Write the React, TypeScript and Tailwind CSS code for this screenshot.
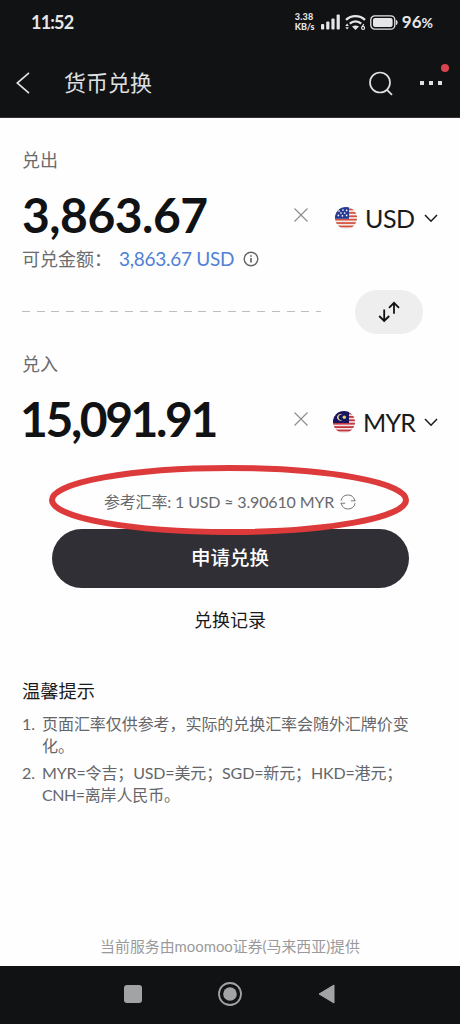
import { ReactNode } from 'react';

const UsFlag = () => (
  <svg viewBox="0 0 22 22" className="ml-[2px] h-[22px] w-[22px]">
    <clipPath id="us-round">
      <circle cx="11" cy="11" r="11" />
    </clipPath>
    <g clipPath="url(#us-round)">
      <rect width="22" height="22" fill="#f3e9e6" />
      {[1.6, 5, 8.4, 11.8, 15.2, 18.6].map((y) => (
        <rect key={y} y={y} width="22" height="1.7" fill="#d2503f" />
      ))}
      <rect width="14" height="11.8" fill="#263c94" />
      {[
        [4, 4], [8, 3], [11.6, 3.4], [6, 6], [9.6, 6], [3.4, 8.4], [7.4, 8.8], [11.6, 8.4],
      ].map(([x, y]) => (
        <circle key={`${x}-${y}`} cx={x} cy={y} r="0.85" fill="#fff" />
      ))}
    </g>
  </svg>
);

const MyFlag = () => (
  <svg viewBox="0 0 22 22" className="h-[22px] w-[22px]">
    <clipPath id="my-round">
      <circle cx="11" cy="11" r="11" />
    </clipPath>
    <g clipPath="url(#my-round)">
      <rect width="22" height="22" fill="#f0e4e6" />
      {[1.6, 5, 8.4, 11.8, 15.2, 18.6].map((y) => (
        <rect key={y} y={y} width="22" height="1.8" fill="#c63640" />
      ))}
      <rect width="16" height="12" fill="#17165f" />
      <path d="M9.4 3.9a3.2 3.2 0 1 0 0 4.9 2.7 2.7 0 1 1 0-4.900z" fill="#e9d9a0" />
      <circle cx="11.3" cy="6.3" r="1.7" fill="#e8cf6a" />
    </g>
  </svg>
);

type CurrencyRowProps = {
  amount: string;
  code: string;
  flag: ReactNode;
  codeClass: string;
  amountClass: string;
};

const CurrencyRow = ({ amount, code, flag, codeClass, amountClass }: CurrencyRowProps) => (
  <div className="flex h-[56px] items-center">
    <p className={`flex-1 text-[48px] leading-[56px] font-bold text-[#111214] ${amountClass}`}>{amount}</p>
    <svg viewBox="0 0 14 14" className="h-[14px] w-[14px]" fill="none" stroke="#8c8c8c" strokeWidth="1.1">
      <path d="M.5.5l13 13M13.5.5l-13 13" />
    </svg>
    <div className="ml-[25px] flex w-[105px] items-center pt-[6px]">
      {flag}
      <span className={`flex-1 text-[25px] leading-[28px] text-[#1a1a1a] ${codeClass}`}>{code}</span>
      <svg viewBox="0 0 14 9" className="h-[9px] w-[14px]" fill="none" stroke="#1a1a1a" strokeWidth="1.5">
        <path d="M1 1l6 6.2L13 1" />
      </svg>
    </div>
  </div>
);

const StatusBar = () => (
  <div className="flex h-[46px] items-center pr-[27px] pb-[2px] pl-[31px] text-[#e6e6e8]">
    <span className="flex-1 text-[18px] font-bold tracking-[-0.8px]">11:52</span>
    <div className="w-[24px] text-[9px] leading-[10px] font-black tracking-[0.2px] whitespace-nowrap">
      <p>3.38</p>
      <p className="tracking-[-0.1px]">KB/s</p>
    </div>
    <svg viewBox="0 0 19 16" className="ml-[2px] h-4 w-[19px]" fill="currentColor">
      <rect x="0" y="10" width="3.2" height="5.5" rx="1" />
      <rect x="5.2" y="7.5" width="3.2" height="8" rx="1" />
      <rect x="10.4" y="4.5" width="3.2" height="11" rx="1" />
      <rect x="15.6" y="0.5" width="3.2" height="15" rx="1" />
    </svg>
    <svg viewBox="0 0 21 17" className="ml-[5px] h-[17px] w-[21px]" fill="none" stroke="currentColor">
      <path d="M1 5.8a14 14 0 0 1 19 0" strokeWidth="2.4" />
      <path d="M4.8 9.6a8.4 8.4 0 0 1 11.4 0" strokeWidth="2.3" />
      <path d="M7 12.6q3.5-2.4 7 0l-3.5 3.4z" fill="currentColor" stroke="none" />
      <path d="M.3 12l1.8-2.4L3.9 12zM.3 13.2l1.8 2.4 1.8-2.4z" fill="currentColor" stroke="none" />
      <path d="M18.8 10l-1.6 2.7" strokeWidth="1.2" />
      <circle cx="18.1" cy="13.9" r="1.5" strokeWidth="1.2" />
    </svg>
    <svg viewBox="0 0 28 15" className="ml-[4px] h-[15px] w-7" fill="none">
      <rect x="0.8" y="0.8" width="24" height="13.4" rx="4" stroke="currentColor" strokeWidth="1.3" />
      <rect x="3" y="3" width="19.6" height="9" rx="2" fill="currentColor" />
      <path d="M26 4.8q1.6.6 1.6 2.7T26 10.200z" fill="currentColor" />
    </svg>
    <span className="ml-[4px] text-[17px] font-bold">
      96<span className="text-[14px]">%</span>
    </span>
  </div>
);

const TitleBar = () => (
  <div className="flex h-[72px] items-center border-b border-[#3a3034] pt-[3px] pr-[18px] pl-[16px] text-[#dfe0e2]">
    <svg viewBox="0 0 14 22" className="h-[22px] w-[14px]" fill="none" stroke="currentColor" strokeWidth="1.7">
      <path d="M13 .8L1.200 11 13 21.200" />
    </svg>
    <h1 className="ml-[34px] flex-1 text-[22px] leading-8">货币兑换</h1>
    <svg viewBox="0 0 24 25" className="h-[25px] w-6" fill="none" stroke="currentColor" strokeWidth="1.7">
      <circle cx="11" cy="11.500" r="10" />
      <path d="M18 18.800l5 5" />
    </svg>
    <div className="relative ml-[27px] flex gap-[5px]">
      <i className="h-1 w-1 bg-current" />
      <i className="h-1 w-1 bg-current" />
      <i className="h-1 w-1 bg-current" />
      <i className="absolute -top-[17px] -right-[7px] h-2 w-2 rounded-full bg-[#d8434f]" />
    </div>
  </div>
);

const Tips = () => (
  <section className="mt-[45px] px-[22px]">
    <h2 className="text-[18.3px] leading-[26px] text-[#1a1a1a]">温馨提示</h2>
    <ol className="mt-[9px] flex flex-col gap-[5px] text-[16px] leading-[22px] text-[#65666a]">
      <li className="flex">
        <span className="w-5">1.</span>
        <p className="w-[376px] tracking-[-0.06px]">页面汇率仅供参考，实际的兑换汇率会随外汇牌价变化。</p>
      </li>
      <li className="flex">
        <span className="w-5">2.</span>
        <p className="w-[376px] tracking-[-0.14px] whitespace-nowrap">
          MYR=令吉；USD=美元；SGD=新元；HKD=港元；
          <br />
          <span className="tracking-[-0.5px]">CNH</span>=离岸人民币。
        </p>
      </li>
    </ol>
  </section>
);

const NavigationBar = () => (
  <nav className="flex h-[58px] items-center justify-between bg-[#111214] pr-[125px] pb-[3px] pl-[124px]">
    <div className="h-[18px] w-[18px] rounded-[3px] bg-[#a2a3a4]" />
    <svg viewBox="0 0 24 24" className="h-6 w-6">
      <circle cx="12" cy="12" r="11" fill="none" stroke="#a2a3a4" strokeWidth="1.8" />
      <circle cx="12" cy="12" r="6.800" fill="#a2a3a4" />
    </svg>
    <svg viewBox="0 0 17 20" className="h-5 w-[17px]">
      <path d="M16 1v18L1 10z" fill="#a2a3a4" stroke="#a2a3a4" strokeLinejoin="round" />
    </svg>
  </nav>
);

export default function App() {
  return (
    <div className="flex h-[1024px] w-[460px] flex-col overflow-hidden bg-[#fefefe] font-[Lato,'Noto_Sans_CJK_SC',sans-serif]">
      <header className="bg-[#111214]">
        <StatusBar />
        <TitleBar />
      </header>

      <main className="flex flex-1 flex-col">
        <section className="px-[22px] pt-[29px]">
          <p className="text-[18px] leading-[26px] text-[#6b6b6b]">兑出</p>
          <div className="mt-[14px]">
            <CurrencyRow amount="3,863.67" code="USD" flag={<UsFlag />} codeClass="pl-[8px] tracking-[-0.5px]" amountClass="tracking-[-0.5px]" />
          </div>
          <div className="mt-[3px] flex h-[26px] items-center text-[18px] text-[#6b6b6b]">
            <span className="w-[97px]">可兑金额：</span>
            <span className="text-[19px] tracking-[-0.27px] text-[#5180d8]">3,863.67 USD</span>
            <svg viewBox="0 0 16 16" className="ml-[9px] h-4 w-4" fill="none" stroke="#666" strokeWidth="1.4">
              <circle cx="8" cy="8" r="6.800" />
              <path d="M8 7v4.600M8 4.200v1.500" strokeWidth="1.700" />
            </svg>
          </div>
        </section>

        <section className="mt-[18px] flex items-center pr-[37px] pl-[22px]">
          <div className="mb-[2px] h-px w-[299px] bg-[repeating-linear-gradient(90deg,#bdbdbd_0_8px,transparent_8px_14.7px)]" />
          <button className="ml-auto flex h-11 w-[68px] items-center justify-center rounded-full bg-[#eeeeee]">
            <svg viewBox="0 0 22 22" className="h-[22px] w-[22px]" fill="none" stroke="#111214" strokeWidth="1.800">
              <path d="M6.200 8.600V20M1.200 15l5 5 5-5M16 12.800V1.800M11 6.800l5-5 5 5" />
            </svg>
          </button>
        </section>

        <section className="mt-[17px] px-[22px]">
          <p className="text-[18px] leading-[26px] text-[#6b6b6b]">兑入</p>
          <div className="mt-[14px]">
            <CurrencyRow amount="15,091.91" code="MYR" flag={<MyFlag />} codeClass="pl-[8px] tracking-[-0.8px]" amountClass="-ml-[2px] tracking-[-2.4px]" />
          </div>
        </section>

        <section className="mt-[44px] flex flex-col items-center">
          <div className="relative flex h-[22px] items-center text-[16px] text-[#68696c]">
            <span className="tracking-[-0.15px] whitespace-pre">参考汇率: 1 USD ≈ 3.90610 MYR</span>
            <svg viewBox="0 0 16 16" className="ml-[6px] h-4 w-4" fill="none" stroke="#77787b" strokeWidth="1">
              <path d="M1 6.800A7 7 0 0 1 14.600 6l.4 1M10.800 6.800H15.400M15 9.200A7 7 0 0 1 1.400 10L1 9M5.200 9.200H.6" />
            </svg>
            {/* hand-marked ring around the rate */}
            <svg viewBox="0 0 360 70" className="absolute top-[-26px] left-1/2 z-10 -ml-px h-[70px] w-[360px] max-w-none -translate-x-1/2">
              <ellipse cx="180" cy="35" rx="177" ry="32" fill="none" stroke="#dd3b3b" strokeWidth="6" />
            </svg>
          </div>
          <button className="mt-[16px] h-[59px] w-[357px] rounded-full bg-[#2f2f35] pb-[2px] text-[19.5px] font-medium text-white">申请兑换</button>
          <p className="mt-[19px] text-[18px] leading-[26px] text-[#1a1a1a]">兑换记录</p>
        </section>

        <Tips />

        <footer className="mt-auto pb-[9px] text-center text-[14.9px] leading-[22px] text-[#9a9a9c]">当前服务由moomoo证券(马来西亚)提供</footer>
      </main>

      <NavigationBar />
    </div>
  );
}
